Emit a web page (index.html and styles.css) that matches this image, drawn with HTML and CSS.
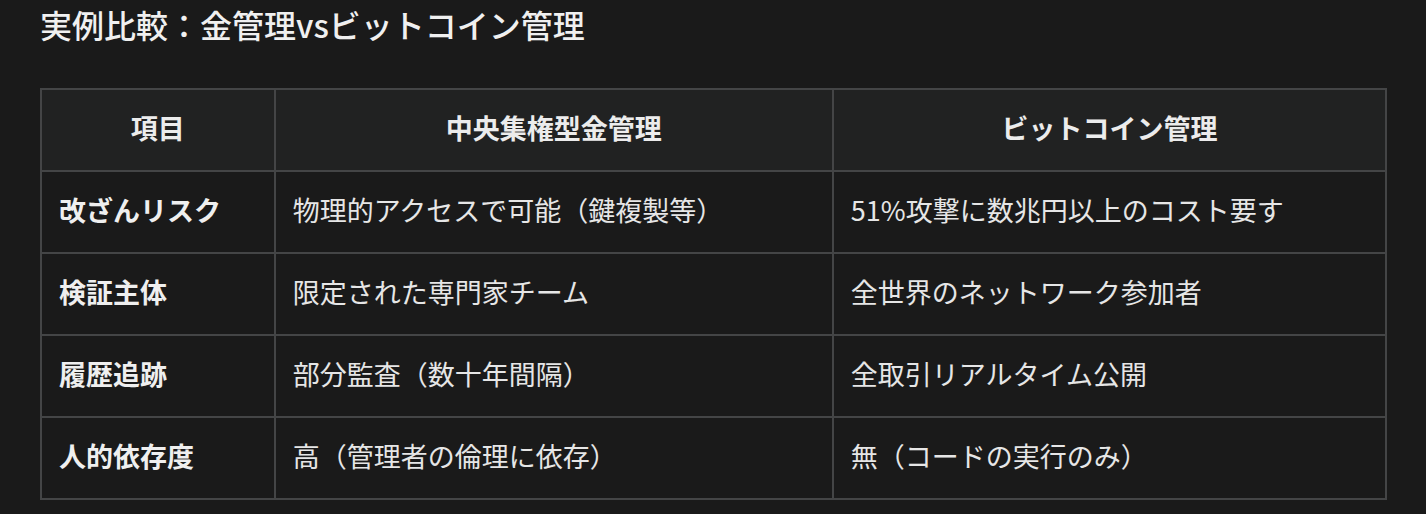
FILE: index.html
```html
<!DOCTYPE html>
<html lang="ja">
<head>
<meta charset="utf-8">
<link rel="stylesheet" href="styles.css">
</head>
<body>
<main class="page">
  <h2 class="title">実例比較：金管理vsビットコイン管理</h2>
  <table class="cmp">
    <colgroup>
      <col class="c1"><col class="c2"><col class="c3">
    </colgroup>
    <thead>
      <tr><th>項目</th><th>中央集権型金管理</th><th>ビットコイン管理</th></tr>
    </thead>
    <tbody>
      <tr><td class="key">改ざんリスク</td><td>物理的アクセスで可能（鍵複製等）</td><td>51%攻撃に数兆円以上のコスト要す</td></tr>
      <tr><td class="key">検証主体</td><td>限定された専門家チーム</td><td>全世界のネットワーク参加者</td></tr>
      <tr><td class="key">履歴追跡</td><td>部分監査（数十年間隔）</td><td>全取引リアルタイム公開</td></tr>
      <tr><td class="key">人的依存度</td><td>高（管理者の倫理に依存）</td><td>無（コードの実行のみ）</td></tr>
    </tbody>
  </table>
</main>
</body>
</html>
```

FILE: styles.css
```css
html, body {
  margin: 0;
  padding: 0;
  background: #1a1a1a;
}
.page {
  padding: 0 40px;
  font-family: "Noto Sans CJK JP", "Noto Sans", sans-serif;
  color: #ececec;
}
.title {
  margin: 2px 0 42px;
  font-size: 32px;
  line-height: 44px;
  font-weight: 500;
  color: #f0f0f0;
}
.cmp {
  width: 1347px;
  border-collapse: collapse;
  font-size: 27px;
}
.c1 { width: 234px; }
.c2 { width: 559px; }
.c3 { width: 554px; }
.cmp th, .cmp td {
  border: 2px solid #444546;
  height: 82px;
  padding: 0 17px 5px;
  box-sizing: border-box;
}
.cmp th {
  background: #212222;
  font-weight: 700;
  text-align: center;
  color: #ececec;
}
.cmp td {
  font-weight: 400;
  text-align: left;
  color: #e6e6e6;
}
.cmp td.key {
  font-weight: 700;
  color: #efefef;
}
```
